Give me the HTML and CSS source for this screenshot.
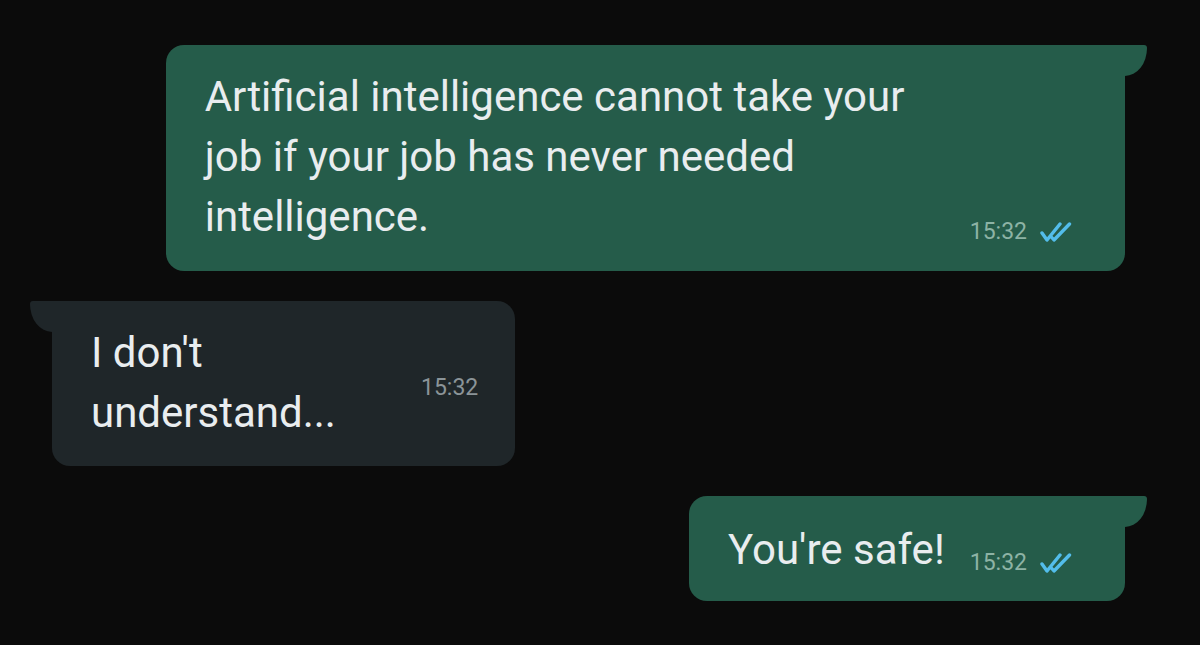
FILE: index.html
```html
<!DOCTYPE html>
<html>

<head>
    <meta charset="UTF-8">
    <meta name="viewport" content="width=device-width, initial-scale=1.0">
    <title>Chat</title>
    <link rel="stylesheet" href="styles.css">
</head>

<body>

    <div class="chat">

        <div class="bubble out first">
            <svg class="tail" width="22" height="31" viewBox="0 0 22 31"><path d="M0 0 H19 Q22 0 22 3 A22 28 0 0 1 0 31 Z"/></svg>
            <p class="text wide">Artificial intelligence cannot take your job if your job has never needed intelligence.</p>
            <div class="meta">
                <span class="time">15:32</span>
                <svg class="ticks" width="34" height="22" viewBox="0 0 34 22"><path d="M2 12 L7 19 L20 3 M10.5 15 L14 19 L29.5 3"/></svg>
            </div>
        </div>

        <div class="bubble in">
            <svg class="tail" width="22" height="31" viewBox="0 0 22 31"><path d="M22 0 H3 Q0 0 0 3 A22 28 0 0 0 22 31 Z"/></svg>
            <p class="text narrow">I don't understand...</p>
            <div class="meta">
                <span class="time">15:32</span>
            </div>
        </div>

        <div class="bubble out last">
            <svg class="tail" width="22" height="31" viewBox="0 0 22 31"><path d="M0 0 H19 Q22 0 22 3 A22 28 0 0 1 0 31 Z"/></svg>
            <p class="text">You're safe!</p>
            <div class="meta">
                <span class="time">15:32</span>
                <svg class="ticks" width="34" height="22" viewBox="0 0 34 22"><path d="M2 12 L7 19 L20 3 M10.5 15 L14 19 L29.5 3"/></svg>
            </div>
        </div>

    </div>

</body>
</html>
```

FILE: styles.css
```css
*{
    margin: 0px;
    padding: 0px;
    box-sizing: border-box;
}
body{
    background-color: #0b0b0b;
    font-family: Roboto, "Liberation Sans", sans-serif;
    color: #e9edef;
}
.chat{
    display: flex;
    flex-direction: column;
    gap: 30px;
    padding: 45px 75px 0px 52px;
}
.bubble{
    position: relative;
    display: flex;
    align-items: flex-end;
    border-radius: 18px;
}
.out{
    align-self: flex-end;
    background-color: #255c4a;
    border-top-right-radius: 0px;
    padding: 22px 51px 24px 39px;
}
.last{
    padding-top: 24px;
    padding-bottom: 21px;
}
.in{
    align-self: flex-start;
    align-items: center;
    background-color: #1f2629;
    border-top-left-radius: 0px;
    padding: 22px 37px 23px 39px;
}
.tail{
    position: absolute;
    top: 0px;
}
.out .tail{
    right: -22px;
    fill: #255c4a;
}
.in .tail{
    left: -22px;
    fill: #1f2629;
}
.text{
    font-size: 42px;
    line-height: 60px;
}
.wide{
    width: 740px;
}
.narrow{
    width: 290px;
}
.meta{
    display: flex;
    align-items: center;
    gap: 13px;
    margin-left: 25px;
    margin-bottom: 2px;
    height: 30px;
}
.first .meta{
    margin-bottom: 0px;
}
.in .meta{
    margin-left: 40px;
    margin-bottom: 0px;
    margin-top: 10px;
}
.time{
    font-size: 23px;
    line-height: 30px;
}
.out .time{
    color: #8db3a5;
}
.in .time{
    color: #8b9498;
}
.ticks{
    fill: none;
    stroke: #53bdeb;
    stroke-width: 3.4;
    stroke-linecap: round;
    stroke-linejoin: round;
}
```
